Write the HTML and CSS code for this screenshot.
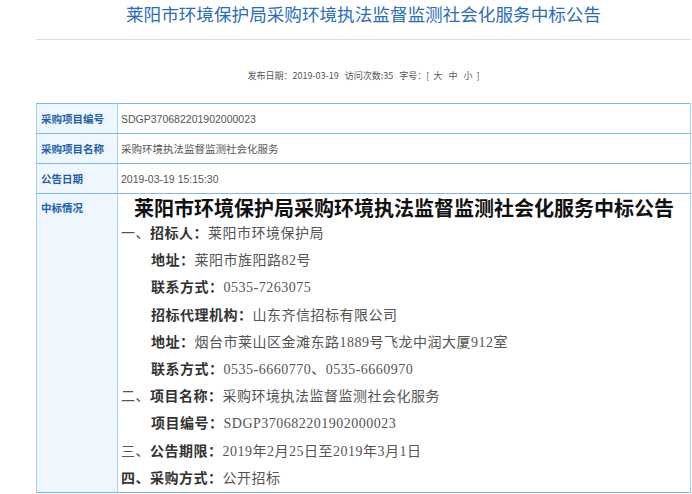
FILE: index.html
```html
<!DOCTYPE html>
<html lang="zh-CN">
<head>
    <meta charset="UTF-8">
    <meta name="viewport" content="width=device-width, initial-scale=1.0">
    <title>莱阳市环境保护局采购环境执法监督监测社会化服务中标公告</title>
    <link rel="stylesheet" href="styles.css">
</head>
<body>
    <div class="page">
        <h1 class="title">莱阳市环境保护局采购环境执法监督监测社会化服务中标公告</h1>
        <div class="meta">
            发布日期：2019-03-19&nbsp;&nbsp; 访问次数:35&nbsp;&nbsp; 字号：[ <span>大</span> <span>中</span> <span>小</span> ]
        </div>

        <table class="info">
            <tr>
                <th>采购项目编号</th>
                <td>SDGP370682201902000023</td>
            </tr>
            <tr>
                <th>采购项目名称</th>
                <td>采购环境执法监督监测社会化服务</td>
            </tr>
            <tr>
                <th>公告日期</th>
                <td>2019-03-19 15:15:30</td>
            </tr>
            <tr class="detail-row">
                <th>中标情况</th>
                <td class="detail">
                    <h2>莱阳市环境保护局采购环境执法监督监测社会化服务中标公告</h2>
                    <p>一、<b>招标人：</b>莱阳市环境保护局</p>
                    <p class="sub"><b>地址：</b>莱阳市旌阳路82号</p>
                    <p class="sub"><b>联系方式：</b>0535-7263075</p>
                    <p class="sub"><b>招标代理机构：</b>山东齐信招标有限公司</p>
                    <p class="sub"><b>地址：</b>烟台市莱山区金滩东路1889号飞龙中润大厦912室</p>
                    <p class="sub"><b>联系方式：</b>0535-6660770、0535-6660970</p>
                    <p>二、<b>项目名称：</b>采购环境执法监督监测社会化服务</p>
                    <p class="sub"><b>项目编号：</b>SDGP370682201902000023</p>
                    <p>三、<b>公告期限：</b>2019年2月25日至2019年3月1日</p>
                    <p><b>四、采购方式：</b>公开招标</p>
                </td>
            </tr>
        </table>
    </div>
</body>
</html>
```

FILE: styles.css
```css
body {
    margin: 0;
    padding: 0;
    background: #fff;
    font-family: "Liberation Sans", "Noto Sans CJK SC", sans-serif;
    color: #333;
    overflow: hidden;
}

.page {
    margin-left: 36px;
    width: 655px;
}

.title {
    margin: 0;
    padding-top: 3px;
    height: 36px;
    line-height: 24px;
    font-size: 17.6px;
    font-weight: normal;
    color: #2b6cbd;
    text-align: center;
    border-bottom: 1px solid #dcdcdc;
}

.meta {
    margin-top: 27px;
    height: 36px;
    line-height: 18px;
    font-family: "Noto Sans CJK SC", sans-serif;
    font-size: 9px;
    color: #555;
    text-align: center;
}

.meta span {
    margin: 0 2px;
}

.info {
    width: 655px;
    border-collapse: collapse;
    font-size: 10.5px;
}

.info th,
.info td {
    height: 29px;
    padding: 0 3px;
    border-top: 1px solid #7fbbe8;
    border-bottom: 1px solid #7fbbe8;
    border-left: 1px solid #a3d1f3;
    border-right: 1px solid #a3d1f3;
    text-align: left;
}

.info th {
    width: 73px;
    padding-left: 4px;
    background: #eef7fe;
    color: #1d5fa8;
    font-weight: bold;
}

.info td {
    color: #555;
}

.detail-row th {
    vertical-align: top;
    padding-top: 6px;
}

.detail {
    vertical-align: top;
    font-family: "Liberation Serif", "Noto Sans CJK SC", serif;
    font-size: 14px;
    letter-spacing: 0.5px;
    color: #777;
}

.detail h2 {
    margin: 1px 0 0;
    line-height: 25px;
    font-family: "Noto Sans CJK SC", sans-serif;
    font-size: 20px;
    letter-spacing: 0;
    color: #111;
    text-align: center;
}

.detail p {
    margin: 0;
    line-height: 27.2px;
    white-space: nowrap;
}

.detail p.sub {
    padding-left: 30px;
}

.detail b {
    color: #333;
}
```
